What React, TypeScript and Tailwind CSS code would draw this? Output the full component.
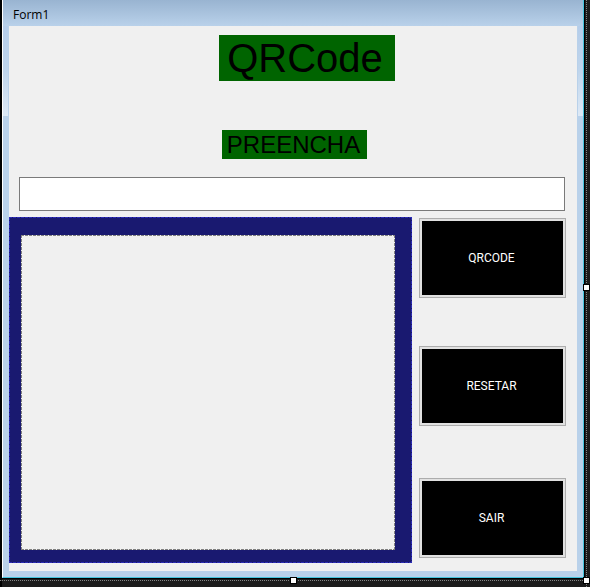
import React, { useState } from "react";

const DOTS_DOWN =
  "bg-[repeating-linear-gradient(to_bottom,#858585_0_1px,#1b1b1b_1px_2px)]";
const DOTS_ACROSS =
  "bg-[repeating-linear-gradient(to_right,#858585_0_1px,#1b1b1b_1px_2px)]";

function Handle({ place }: { place: string }) {
  return (
    <span
      className={`absolute size-[7px] border border-black bg-white ${place}`}
    />
  );
}

type DashedBoxProps = {
  across: string;
  down: string;
  className: string;
  children?: React.ReactNode;
};

// A box with the one-pixel dashed outline of the form designer.
function DashedBox({ across, down, className, children }: DashedBoxProps) {
  return (
    <div className={`relative ${className}`}>
      <span className={`absolute inset-x-0 top-0 h-px ${across}`} />
      <span className={`absolute inset-x-0 bottom-0 h-px ${across}`} />
      <span className={`absolute inset-y-0 left-0 w-px ${down}`} />
      <span className={`absolute inset-y-0 right-0 w-px ${down}`} />
      {children}
    </div>
  );
}

function FormButton({
  label,
  onClick,
}: {
  label: string;
  onClick?: () => void;
}) {
  return (
    <button
      type="button"
      onClick={onClick}
      className="h-20 w-full border border-[#adadad] bg-[#e1e1e1] p-0.5 font-[Roboto,sans-serif] text-xs text-white"
    >
      <span className="flex h-full items-center justify-center bg-black pr-0.5">
        {label}
      </span>
    </button>
  );
}

function SideFrame({ edge }: { edge: string }) {
  return (
    <div className={`w-1.5 shrink-0 bg-[#b9d1ea] ${edge}`}>
      <div className="h-[90px] bg-linear-to-b from-[#b5cdea] via-[#bfd5ec] to-[#dde9f6]" />
    </div>
  );
}

export default function App() {
  const [text, setText] = useState("");

  return (
    <main className="relative flex h-screen min-h-[587px] bg-[#1b1b1b] font-['Liberation_Sans',Arial,sans-serif] text-black">
      <div className="w-0.5 shrink-0 bg-black" />
      <div className="mr-[5px] mb-2 flex grow flex-col border-r border-b border-black">
        <section className="flex grow flex-col border-r border-b border-l border-r-[#45c4dd] border-b-[#45c4dd] border-l-white bg-[#b9d1ea] pb-1.5">
          <header className="flex h-[26px] shrink-0 items-center bg-linear-to-b from-[#99b4d1] to-[#b9d1ea] px-2.5 pt-1 font-['Open_Sans',sans-serif] text-xs">
            Form1
          </header>
          <div className="flex grow">
            <SideFrame edge="pr-px" />
            <div className="flex grow flex-col bg-[#f0f0f0] pt-[9px] pb-2">
              <div className="flex justify-center pl-7">
                <h1 className="bg-[#006400] pr-3 pl-2 text-[40px] leading-[46px]">
                  QRCode
                </h1>
              </div>
              <div className="mt-[49px] flex justify-center pl-[3px]">
                <label
                  htmlFor="content"
                  className="bg-[#006400] pr-[7px] pl-[5px] text-2xl leading-[29px]"
                >
                  PREENCHA
                </label>
              </div>
              <div className="mt-[18px] flex pr-3 pl-2.5">
                <input
                  id="content"
                  type="text"
                  value={text}
                  onChange={(event) => setText(event.target.value)}
                  className="h-[34px] w-full border border-[#7a7a7a] bg-white px-1 text-xl outline-none"
                />
              </div>
              <div className="mt-1.5 flex grow gap-[7px] pr-[11px]">
                <DashedBox
                  className="flex grow bg-[#191970] pt-[18px] pr-[17px] pb-[13px] pl-3"
                  across="bg-[repeating-linear-gradient(to_right,#2b2bb4_0_3px,#191970_3px_4px)]"
                  down="bg-[repeating-linear-gradient(to_bottom,#2b2bb4_0_3px,#191970_3px_4px)]"
                >
                  <DashedBox
                    className="grow bg-[#f0f0f0]"
                    across="bg-[repeating-linear-gradient(to_right,#808080_0_3px,#f0f0f0_3px_4px)]"
                    down="bg-[repeating-linear-gradient(to_bottom,#808080_0_3px,#f0f0f0_3px_4px)]"
                  />
                </DashedBox>
                <div className="flex w-[147px] shrink-0 flex-col pt-px pb-[5px]">
                  <FormButton label="QRCODE" />
                  <div className="grow-12" />
                  <FormButton label="RESETAR" onClick={() => setText("")} />
                  <div className="grow-13" />
                  <FormButton label="SAIR" />
                </div>
              </div>
            </div>
            <SideFrame edge="pl-px" />
          </div>
        </section>
      </div>
      <span className={`absolute inset-y-0 right-[3px] w-px ${DOTS_DOWN}`} />
      <span className={`absolute inset-x-0 bottom-1.5 h-px ${DOTS_ACROSS}`} />
      <Handle place="top-[284px] right-0" />
      <Handle place="bottom-[3px] left-[290px]" />
      <Handle place="right-0 bottom-[3px]" />
    </main>
  );
}
